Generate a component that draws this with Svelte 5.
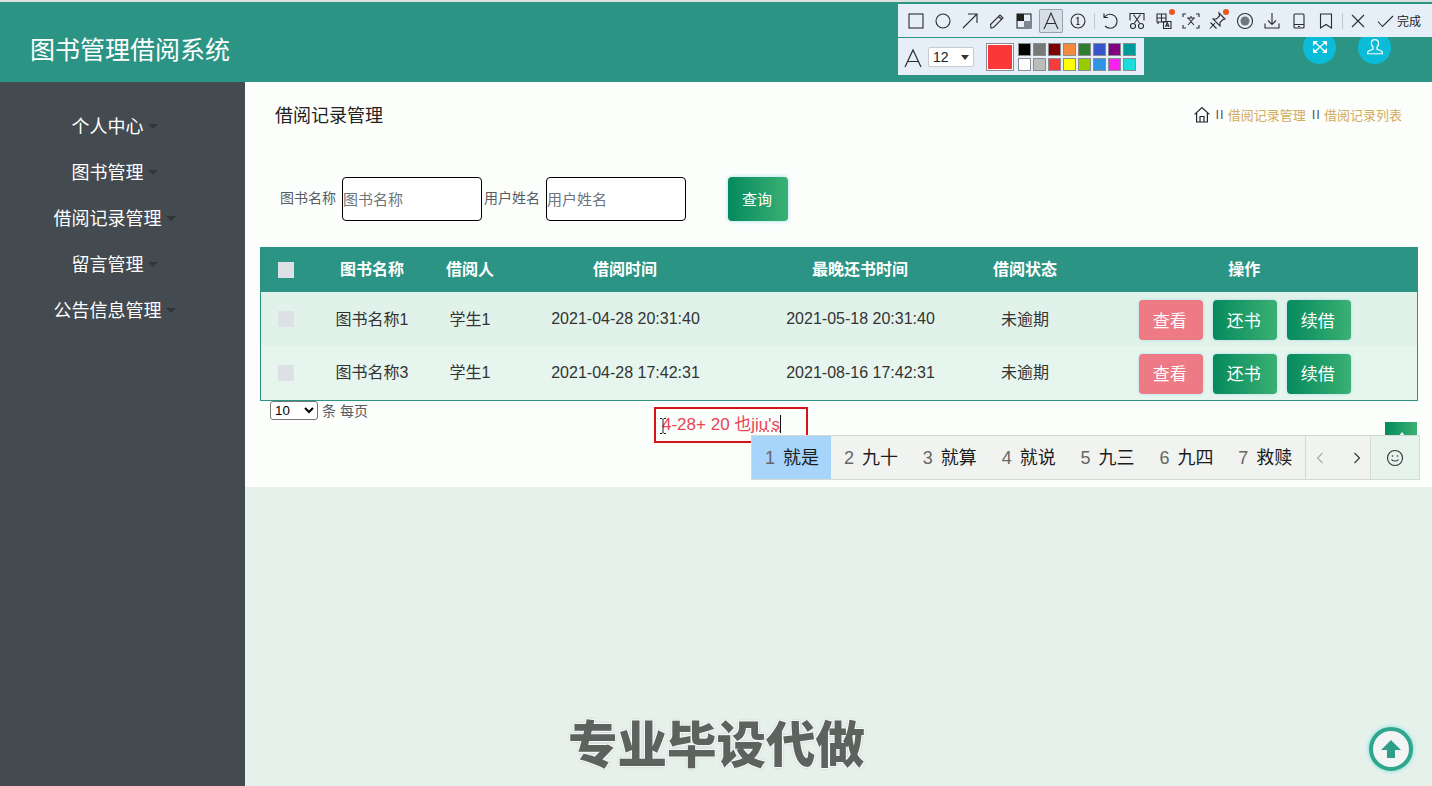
<script>
  const menu = ['个人中心', '图书管理', '借阅记录管理', '留言管理', '公告信息管理'];
  const rows = [
    { name: '图书名称1', user: '学生1', borrowed: '2021-04-28 20:31:40', due: '2021-05-18 20:31:40', state: '未逾期' },
    { name: '图书名称3', user: '学生1', borrowed: '2021-04-28 17:42:31', due: '2021-08-16 17:42:31', state: '未逾期' }
  ];
  const palette = ['#000000', '#777976', '#7d0000', '#f48a3c', '#2f7d2f', '#3a55cc', '#800080', '#009999',
    '#ffffff', '#bbbdb9', '#f83a3a', '#ffff00', '#99cc00', '#3094e4', '#f722ee', '#1cdcdc'];
  const candidates = ['就是', '九十', '就算', '就说', '九三', '九四', '救赎'];
</script>

<div class="page">
  <header class="top">
    <h1>图书管理借阅系统</h1>
    <div class="round-actions">
      <span class="round">
        <svg viewBox="0 0 18 16" width="18" height="16"><path d="M4 3.500l10 9M14 3.500l-10 9" /><path class="head" d="M2 2h5L5.500 3.500 3.500 5.500 2 7zM16 2h-5l1.500 1.500 2 2L16 7zM2 14h5l-1.500-1.500-2-2L2 9zM16 14h-5l1.500-1.500 2-2L16 9z" /></svg>
      </span>
      <span class="round">
        <svg viewBox="0 0 16 16" width="18" height="18"><path d="M8 1.500c-2 0-3.200 1.400-3.200 3.100 0 1.600.7 2.700 1.400 3.400v2c-1.500.6-4.200 1-4.700 2.500v1.500h13V12.500c-.5-1.500-3.200-1.900-4.700-2.500V8c.7-.7 1.400-1.800 1.400-3.400 0-1.700-1.200-3.100-3.200-3.100z" /></svg>
      </span>
    </div>
  </header>

  <div class="body">
    <nav class="side">
      {#each menu as item}
        <a class="menu-item" href="#/">{item}<i class="caret"></i></a>
      {/each}
    </nav>

    <main class="main">
      <section class="content">
        <div class="heading">
          <h2>借阅记录管理</h2>
          <div class="crumbs">
            <svg viewBox="0 0 16 17" width="16" height="17"><path d="M.6 8.400 8 1.500l7.400 6.900M2.600 7v9h10.800V7M6 16v-5.500h4V16" /></svg>
            <span class="sep">II</span><span class="crumb">借阅记录管理</span><span class="sep">II</span><span class="crumb">借阅记录列表</span>
          </div>
        </div>

        <form class="search">
          <label class="first" for="book">图书名称</label>
          <input id="book" placeholder="图书名称" />
          <label for="user">用户姓名</label>
          <input id="user" placeholder="用户姓名" />
          <button type="button" class="btn-green query">查询</button>
        </form>

        <table>
          <colgroup>
            <col class="c1" /><col class="c2" /><col class="c3" /><col class="c4" /><col class="c5" /><col class="c6" /><col />
          </colgroup>
          <thead>
            <tr>
              <th><span class="check head"></span></th>
              <th>图书名称</th><th>借阅人</th><th>借阅时间</th><th>最晚还书时间</th><th>借阅状态</th><th>操作</th>
            </tr>
          </thead>
          <tbody>
            {#each rows as row}
              <tr>
                <td><span class="check"></span></td>
                <td class="cjk">{row.name}</td><td class="cjk">{row.user}</td><td>{row.borrowed}</td><td>{row.due}</td><td class="cjk">{row.state}</td>
                <td>
                  <div class="ops">
                    <button type="button" class="btn pink">查看</button>
                    <button type="button" class="btn btn-green">还书</button>
                    <button type="button" class="btn btn-green">续借</button>
                  </div>
                </td>
              </tr>
            {/each}
          </tbody>
        </table>

        <div class="pager">
          <select><option>10</option></select>
          <span class="pager-text">条 每页</span>
          <span class="page-btn"><i></i></span>
        </div>
      </section>
      <div class="rest"></div>
    </main>
  </div>

  <div class="toolbar">
    <svg viewBox="0 0 24 24"><rect x="5" y="5" width="14" height="14" /></svg>
    <svg viewBox="0 0 24 24"><circle cx="12" cy="12" r="7" /></svg>
    <svg viewBox="0 0 24 24"><path d="M5 19 19 5M10 5h9v9" /></svg>
    <svg viewBox="0 0 24 24"><path d="M6 19l-.5-3.500L15 6l3 3-9.500 9.500zM13.500 7.500l3 3" /></svg>
    <svg viewBox="0 0 24 24"><rect x="5" y="5" width="14" height="14" /><rect class="dark" x="5" y="5" width="7" height="7" /><rect class="grey" x="12" y="12" width="7" height="7" /></svg>
    <span class="selected"><svg viewBox="0 0 24 24"><path d="M5 20 12 4l7 16M7.500 14.500h9" /></svg></span>
    <svg viewBox="0 0 24 24"><circle cx="12" cy="12" r="7" /><path d="M10.500 9.500 12 8.500v7M10.500 15.500h3" /></svg>
    <b class="divider"></b>
    <svg viewBox="0 0 24 24"><path d="M6.500 8A7 7 0 1 1 7 17M6 4.500V8.500h4" /></svg>
    <svg viewBox="0 0 24 24"><path d="M5 11.500V4.500h14v7M8.500 5.500l6 8.500M15.500 5.500l-6 8.500" /><circle cx="8" cy="17" r="2.500" /><circle cx="16" cy="17" r="2.500" /></svg>
    <span class="dotted">
      <svg viewBox="0 0 24 24"><path d="M5 5h9v8H5zM9.500 5v8M5 9h9M7 13l-1.500 2M11.500 12.500H19v7h-7.500zM13.500 18l1.800-4.500 1.800 4.500M14 16.600h2.600" /></svg>
      <em></em>
    </span>
    <svg viewBox="0 0 24 24"><path d="M4 8V5h3M17 5h3v3M4 16v3h3M20 16v3h-3M8 9h8M12 7v2M9 9l6 7M15 9l-6 7" /></svg>
    <span class="dotted">
      <svg viewBox="0 0 24 24"><path d="M13 4l6 6-2 .500-3 3 0 3.500-7-7 3.500 0 3-3zM9 14l-5 5.500M4.500 13.500l6 6" /></svg>
      <em></em>
    </span>
    <svg viewBox="0 0 24 24"><circle cx="12" cy="12" r="7.500" /><circle class="grey-dot" cx="12" cy="12" r="4.500" /></svg>
    <svg viewBox="0 0 24 24"><path d="M12 4v11M8 11.500l4 4 4-4M5 14.500V19h14v-4.500" /></svg>
    <svg viewBox="0 0 24 24"><rect x="7" y="5" width="10" height="14" rx="1" /><path d="M7 15.500h10M11 17.500h2" /></svg>
    <svg viewBox="0 0 24 24"><path d="M6.500 5h11v14L12 15.500 6.500 19z" /></svg>
    <b class="divider"></b>
    <svg viewBox="0 0 24 24"><path d="M6 6l12 12M18 6 6 18" /></svg>
    <svg viewBox="0 0 24 24"><path d="M5 12.500l4.500 5L20 7" /></svg>
    <span class="done">完成</span>
  </div>

  <div class="toolbar-sub">
    <svg class="big-a" viewBox="0 0 20 22" width="20" height="22"><path d="M2 20 10 3l8 17M5 14.500h10" /></svg>
    <div class="size">12<i></i></div>
    <span class="current"></span>
    <div class="palette">
      {#each palette as colour}
        <span style="background:{colour}"></span>
      {/each}
    </div>
  </div>

  <div class="ime-input">
    <svg class="beam" viewBox="0 0 8 16" width="8" height="16"><path d="M1 .5h2l1 1 1-1h2M4 1.500v13M1 15.500h2l1-1 1 1h2" /></svg>
    4-28+ 20 也<u>jiu's</u><i class="ime-caret"></i>
  </div>

  <div class="ime">
    {#each candidates as word, i}
      <span class="cand" class:on={i === 0}><small>{i + 1}</small>{word}</span>
    {/each}
    <div class="ime-arrows">
      <svg class="off" viewBox="0 0 12 16" width="12" height="16"><path d="M8.500 3 3.500 8l5 5" /></svg>
      <svg viewBox="0 0 12 16" width="12" height="16"><path d="M3.500 3l5 5-5 5" /></svg>
    </div>
    <div class="ime-smile">
      <svg viewBox="0 0 18 18" width="18" height="18"><circle cx="9" cy="9" r="7.500" /><path d="M5.500 10.500c1 2 6 2 7 0" /><circle class="eye" cx="6.500" cy="7" r=".8" /><circle class="eye" cx="11.500" cy="7" r=".8" /></svg>
    </div>
  </div>

  <div class="watermark">专业毕设代做</div>

  <div class="to-top">
    <svg viewBox="0 0 24 24" width="24" height="24"><path d="M12 3 22 13h-6v8H8v-8H2z" /></svg>
  </div>
</div>

<style>
  :global(body) {
    margin: 0;
    background: #e6f1ec;
    overflow: hidden;
  }
  .page {
    position: relative;
    width: 1432px;
    height: 786px;
    overflow: hidden;
    display: flex;
    flex-direction: column;
    font-family: "Liberation Sans", "Noto Sans CJK SC", sans-serif;
  }
  .top {
    box-sizing: border-box;
    height: 82px;
    flex: none;
    border-top: 2px solid #d9e2df;
    background: #2c9484;
    display: flex;
    align-items: center;
    justify-content: space-between;
    padding: 12px 41px 0 30px;
  }
  h1 {
    margin: 0;
    font-size: 25px;
    font-weight: 400;
    color: #fff;
  }
  .round-actions {
    display: flex;
    gap: 22px;
    margin-top: -2px;
  }
  .round {
    width: 33px;
    height: 33px;
    border-radius: 50%;
    background: #0bbcd8;
    display: flex;
    align-items: center;
    justify-content: center;
  }
  .round svg {
    fill: none;
    stroke: #fff;
    stroke-width: 1.1;
  }
  .round .head {
    fill: #fff;
    stroke: none;
  }
  .body {
    flex: 1;
    display: flex;
    min-height: 0;
  }
  .side {
    width: 245px;
    flex: none;
    background: #434b50;
    box-sizing: border-box;
    padding-top: 22px;
    display: flex;
    flex-direction: column;
  }
  .menu-item {
    height: 46px;
    line-height: 46px;
    display: block;
    padding-right: 30px;
    text-align: center;
    color: #fff;
    font-size: 18px;
    text-decoration: none;
  }
  .caret {
    display: inline-block;
    width: 0;
    height: 0;
    margin-left: 4px;
    margin-right: -14px;
    vertical-align: 4px;
    border-top: 5px solid #2f3639;
    border-left: 5px solid transparent;
    border-right: 5px solid transparent;
  }
  .main {
    flex: 1;
    min-width: 0;
    display: flex;
    flex-direction: column;
  }
  .content {
    height: 405px;
    box-sizing: border-box;
    background: #fcfefc;
    padding: 0 14px 0 15px;
  }
  .rest {
    flex: 1;
  }
  .heading {
    height: 64px;
    display: flex;
    align-items: center;
    justify-content: space-between;
    padding: 0 16px 0 15px;
  }
  h2 {
    margin: 0;
    font-size: 18px;
    font-weight: 400;
    color: #222;
  }
  .crumbs {
    display: flex;
    align-items: center;
    font-size: 13px;
    color: #d2ab5e;
  }
  .crumbs svg {
    fill: none;
    stroke: #223;
    stroke-width: 1.2;
    margin-right: 6px;
  }
  .sep {
    color: #556;
    font-size: 13px;
    letter-spacing: 1px;
    margin-right: 3px;
    padding-top: 1px;
  }
  .crumb {
    margin-right: 6px;
  }
  .crumb:last-child {
    margin-right: 0;
  }
  .search {
    margin-top: 31px;
    height: 44px;
    display: flex;
    align-items: center;
    color: #555c63;
    font-size: 14px;
    padding-left: 20px;
  }
  .search label {
    width: 56px;
    margin-top: -4px;
    white-space: nowrap;
  }
  .search .first {
    margin-right: 6px;
  }
  .search label:not(.first) {
    margin: -4px 6px 0 2px;
  }
  .search input {
    box-sizing: border-box;
    width: 140px;
    height: 44px;
    border: 1px solid #000;
    border-radius: 4px;
    background: #fff;
    padding: 0;
    outline: none;
    font: 15px "Liberation Sans", "Noto Sans CJK SC", sans-serif;
  }
  .search input::placeholder {
    color: #6c757d;
  }
  .btn-green {
    background: linear-gradient(90deg, #058a5e, #3bb073);
    color: #fff;
  }
  .query {
    width: 60px;
    height: 44px;
    margin-left: 42px;
    padding: 0 2px 2px 0;
    border: none;
    border-radius: 4px;
    font: 15px "Liberation Sans", "Noto Sans CJK SC", sans-serif;
    box-shadow: 0 0 4px #9ddcf0;
  }
  table {
    margin-top: 26px;
    width: 100%;
    table-layout: fixed;
    border-collapse: collapse;
    font-size: 16px;
    color: #333;
    border: 1px solid #2f9383;
    border-top: none;
  }
  .c1 { width: 52px; }
  .c2 { width: 120px; }
  .c3 { width: 76px; }
  .c4 { width: 234px; }
  .c5 { width: 236px; }
  .c6 { width: 94px; }
  th, td {
    padding: 0;
    text-align: center;
    vertical-align: middle;
  }
  thead tr {
    height: 45px;
    background: #2c9484;
    color: #fff;
  }
  th {
    font-weight: 700;
    padding: 0 1px 3px 0;
  }
  td.cjk {
    padding: 0 1px 3px 0;
  }
  tbody tr { height: 54px; background: #e6f5ee; }
  tbody tr:first-child { background: #e1f2ea; }
  .check {
    display: block;
    width: 16px;
    height: 16px;
    margin: 3px 0 0 17px;
    background: #dde0e4;
  }
  tbody .check {
    margin-top: 0;
  }
  .ops {
    display: flex;
    justify-content: center;
    gap: 10px;
    margin-top: 2px;
  }
  .btn {
    width: 64px;
    height: 40px;
    border: none;
    border-radius: 4px;
    padding: 0 2px 2px 0;
    font: 17px "Liberation Sans", "Noto Sans CJK SC", sans-serif;
    box-shadow: 0 0 3px #a9d8ee;
  }
  .pink {
    background: #ed7a84;
    color: #fff;
  }
  .pager {
    display: flex;
    align-items: flex-start;
    gap: 4px;
    padding-left: 10px;
    font-size: 14px;
    color: #555c63;
  }
  .pager select {
    width: 48px;
    height: 19px;
    padding: 0;
    font: 13.300px "Liberation Sans", sans-serif;
    background: #fff;
    border-radius: 3px;
  }
  .pager-text {
    line-height: 20px;
  }
  .page-btn {
    margin: 21px 1px 0 auto;
    width: 32px;
    height: 32px;
    background: linear-gradient(90deg, #058a5e, #3bb073);
    position: relative;
  }
  .page-btn i {
    position: absolute;
    left: 14px;
    top: 10px;
    width: 0;
    height: 0;
    border-left: 3px solid transparent;
    border-right: 3px solid transparent;
    border-bottom: 4px solid #fff;
  }

  .toolbar {
    position: absolute;
    left: 898px;
    top: 4px;
    width: 534px;
    height: 33px;
    box-sizing: border-box;
    padding-left: 6px;
    background: #e6eef7;
    display: flex;
    align-items: center;
    gap: 3px;
  }
  .toolbar svg {
    width: 24px;
    height: 24px;
    flex: none;
    fill: none;
    stroke: #2b2d30;
    stroke-width: 1.1;
    display: block;
  }
  .toolbar .dark { fill: #222; stroke: none; }
  .toolbar .grey { fill: #7b8794; stroke: none; }
  .toolbar .grey-dot { fill: #6f7880; stroke: none; }
  .selected {
    width: 24px;
    height: 24px;
    box-sizing: border-box;
    background: #d6dee8;
    box-shadow: inset 0 0 0 1px #9aa3ad;
    border-radius: 2px;
  }
  .divider {
    width: 1px;
    height: 16px;
    background: #c3c9cf;
    margin: 0 0 0 1px;
  }
  .dotted {
    position: relative;
    width: 24px;
    height: 24px;
  }
  .dotted em {
    position: absolute;
    right: 1px;
    top: 0;
    width: 6px;
    height: 6px;
    border-radius: 50%;
    background: #e8571b;
  }
  .done {
    font-size: 12px;
    color: #222;
    margin-left: -3px;
  }
  .toolbar-sub {
    position: absolute;
    left: 898px;
    top: 38px;
    width: 246px;
    height: 37px;
    background: #e6eef7;
    display: flex;
    align-items: center;
    box-sizing: border-box;
    padding-left: 5px;
  }
  .big-a {
    fill: none;
    stroke: #2b2d30;
    stroke-width: 1.2;
    margin-top: 2px;
  }
  .size {
    position: relative;
    box-sizing: border-box;
    width: 46px;
    height: 20px;
    margin-left: 5px;
    padding-left: 4px;
    background: #fff;
    border: 1px solid #c8ccd0;
    border-radius: 2px;
    font-size: 14px;
    line-height: 18px;
    color: #222;
  }
  .size i {
    position: absolute;
    right: 4px;
    top: 7px;
    width: 0;
    height: 0;
    border-top: 5px solid #333;
    border-left: 4.500px solid transparent;
    border-right: 4.500px solid transparent;
  }
  .current {
    box-sizing: border-box;
    width: 28px;
    height: 28px;
    margin-left: 12px;
    border: 1px solid #8a8d90;
    background: #fa3838;
    box-shadow: inset 0 0 0 1px #fff;
  }
  .palette {
    margin-left: 4px;
    display: grid;
    grid-template-columns: repeat(8, 13px);
    grid-auto-rows: 13px;
    gap: 2px;
  }
  .palette span {
    box-sizing: border-box;
    border: 1px solid #8a8d90;
  }

  .ime-input {
    position: absolute;
    left: 654px;
    top: 407px;
    box-sizing: border-box;
    width: 154px;
    height: 36px;
    border: 2px solid #d4141a;
    background: #fcfefc;
    padding-left: 6px;
    font-size: 17px;
    line-height: 32px;
    color: #e84553;
    white-space: nowrap;
  }
  .ime-input u {
    text-decoration: underline dotted;
  }
  .beam {
    position: absolute;
    left: 3px;
    top: 9px;
    fill: none;
    stroke: #222;
    stroke-width: 1;
  }
  .ime-caret {
    display: inline-block;
    width: 1px;
    height: 18px;
    background: #111;
    vertical-align: -3px;
  }
  .ime {
    position: absolute;
    left: 751px;
    top: 435px;
    width: 669px;
    height: 45px;
    box-sizing: border-box;
    background: #f1f3f1;
    border: 1px solid #d5d9d6;
    display: flex;
    align-items: stretch;
    font-size: 18px;
    color: #1c1c1c;
  }
  .cand {
    width: 78.900px;
    flex: none;
    box-sizing: border-box;
    padding-left: 13px;
    line-height: 45px;
    white-space: nowrap;
  }
  .cand.on {
    background: #a6d4fb;
  }
  .cand small {
    font-size: 18px;
    color: #666;
    margin-right: 8px;
  }
  .ime-arrows {
    margin-left: 1px;
    width: 65px;
    flex: none;
    box-sizing: border-box;
    border-left: 1px solid #d5d9d6;
    padding: 0 7px 0 8px;
    display: flex;
    align-items: center;
    justify-content: space-between;
  }
  .ime-arrows svg {
    fill: none;
    stroke: #333;
    stroke-width: 1.1;
  }
  .ime-arrows .off {
    stroke: #aaa;
  }
  .ime-smile {
    flex: 1;
    border-left: 1px solid #d5d9d6;
    background: #e5f3ec;
    display: flex;
    align-items: center;
    justify-content: center;
  }
  .ime-smile svg {
    fill: none;
    stroke: #333;
    stroke-width: 1.1;
  }
  .ime-smile .eye {
    fill: #333;
    stroke: none;
  }
  .watermark {
    position: absolute;
    left: 568px;
    top: 707px;
    font: 900 49.500px "Noto Sans CJK SC", sans-serif;
    line-height: 70px;
    color: #5c625d;
    white-space: nowrap;
    text-shadow: 1px 1px 0 #f4f7f5, -1px -1px 0 #f4f7f5, 1px -1px 0 #f4f7f5, -1px 1px 0 #f4f7f5, 0 0 3px #8f9592;
  }
  .to-top {
    position: absolute;
    left: 1369px;
    top: 727px;
    box-sizing: border-box;
    width: 44px;
    height: 44px;
    border-radius: 50%;
    border: 4px solid #2fa78e;
    background: #f2f5f3;
    box-shadow: 0 0 4px #6fdcd8;
    display: flex;
    align-items: center;
    justify-content: center;
  }
  .to-top svg {
    fill: #2f9e88;
  }
</style>
